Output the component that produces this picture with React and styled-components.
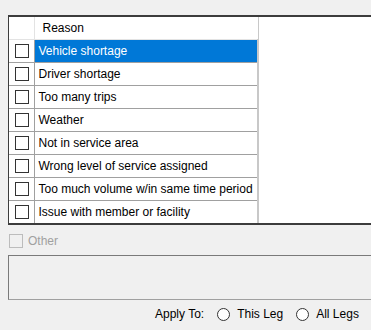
import styled, { createGlobalStyle } from 'styled-components';

const GlobalStyle = createGlobalStyle`
  html, body {
    margin: 0;
    padding: 0;
    background: #f0f0f0;
  }
`;

const reasons = [
  'Vehicle shortage',
  'Driver shortage',
  'Too many trips',
  'Weather',
  'Not in service area',
  'Wrong level of service assigned',
  'Too much volume w/in same time period',
  'Issue with member or facility',
];

const Page = styled.div`
  width: 371px;
  height: 330px;
  overflow: hidden;
  background: #f0f0f0;
  font-family: "Liberation Sans", Arial, sans-serif;
  font-size: 12px;
  color: #000;
  padding: 15px 0 0 8px;
  box-sizing: border-box;
  display: flex;
  flex-direction: column;
`;

const Grid = styled.div`
  width: 380px;
  height: 210px;
  box-sizing: border-box;
  border: 1px solid #a0a0a0;
  border-top: 2px solid #3c3c3c;
  border-left: 1px solid #3c3c3c;
  border-bottom: 2px solid #3c3c3c;
  background: #fff;
  overflow: hidden;
  flex-shrink: 0;
`;

const Table = styled.table`
  border-collapse: collapse;
  table-layout: fixed;
`;

const HeaderCell = styled.th`
  height: 22px;
  padding: 0 0 0 ${(p) => p.$pad || 0}px;
  font-weight: normal;
  text-align: left;
  background: #fff;
  border-bottom: 1px solid #e3e3e3;
  border-right: 1px solid ${(p) => (p.$last ? '#c8c8c8' : '#e3e3e3')};
  width: ${(p) => p.$width}px;
  box-sizing: border-box;
`;

const Row = styled.tr`
  background: ${(p) => (p.$selected ? '#0078d7' : '#fff')};
  color: ${(p) => (p.$selected ? '#fff' : '#000')};
`;

const CheckCell = styled.td`
  height: 22px;
  padding: 0 0 0 1px;
  border-bottom: 1px solid #a0a0a0;
  border-right: 1px solid #a0a0a0;
  background: #fff;
  text-align: center;
  vertical-align: middle;
`;

const TextCell = styled.td`
  height: 22px;
  padding: 0 0 0 4px;
  border-bottom: 1px solid #a0a0a0;
  border-right: 2px solid #c8c8c8;
  white-space: nowrap;
  overflow: hidden;
`;

const Box = styled.span`
  display: inline-block;
  width: 14px;
  height: 14px;
  box-sizing: border-box;
  border: 1px solid ${(p) => (p.$disabled ? '#bcbcbc' : '#333')};
  background: ${(p) => (p.$disabled ? '#f0f0f0' : '#fff')};
  vertical-align: middle;
`;

const OtherRow = styled.label`
  display: flex;
  align-items: center;
  gap: 5px;
  margin-top: 9px;
  margin-left: 1px;
  height: 14px;
  color: #a0a0a0;
`;

const TextBox = styled.div`
  margin-top: 7px;
  width: 380px;
  height: 45px;
  box-sizing: border-box;
  border: 1px solid #a0a0a0;
  border-top-color: #7a7a7a;
  border-left-color: #7a7a7a;
  background: #f0f0f0;
  flex-shrink: 0;
`;

const ApplyRow = styled.div`
  display: flex;
  align-items: center;
  margin-top: 6px;
  padding-left: 147px;
  height: 16px;
  white-space: nowrap;
  flex-shrink: 0;
`;

const ApplyLabel = styled.span`
  margin-right: 13px;
  flex-shrink: 0;
`;

const RadioOption = styled.label`
  display: flex;
  align-items: center;
  gap: 7px;
  margin-right: 13px;
  flex-shrink: 0;
`;

const RadioCircle = styled.span`
  display: inline-block;
  width: 13px;
  height: 13px;
  box-sizing: border-box;
  border: 1px solid #333;
  border-radius: 50%;
  background: #fff;
`;

export default function App() {
  return (
    <Page>
      <GlobalStyle />
      <Grid>
        <Table>
          <thead>
            <tr>
              <HeaderCell $width={25} />
              <HeaderCell $width={224} $pad={8} $last>Reason</HeaderCell>
            </tr>
          </thead>
          <tbody>
            {reasons.map((reason, i) => (
              <Row key={reason} $selected={i === 0}>
                <CheckCell>
                  <Box />
                </CheckCell>
                <TextCell>{reason}</TextCell>
              </Row>
            ))}
          </tbody>
        </Table>
      </Grid>
      <OtherRow>
        <Box $disabled />
        Other
      </OtherRow>
      <TextBox />
      <ApplyRow>
        <ApplyLabel>Apply To:</ApplyLabel>
        <RadioOption>
          <RadioCircle />
          This Leg
        </RadioOption>
        <RadioOption>
          <RadioCircle />
          All Legs
        </RadioOption>
      </ApplyRow>
    </Page>
  );
}
